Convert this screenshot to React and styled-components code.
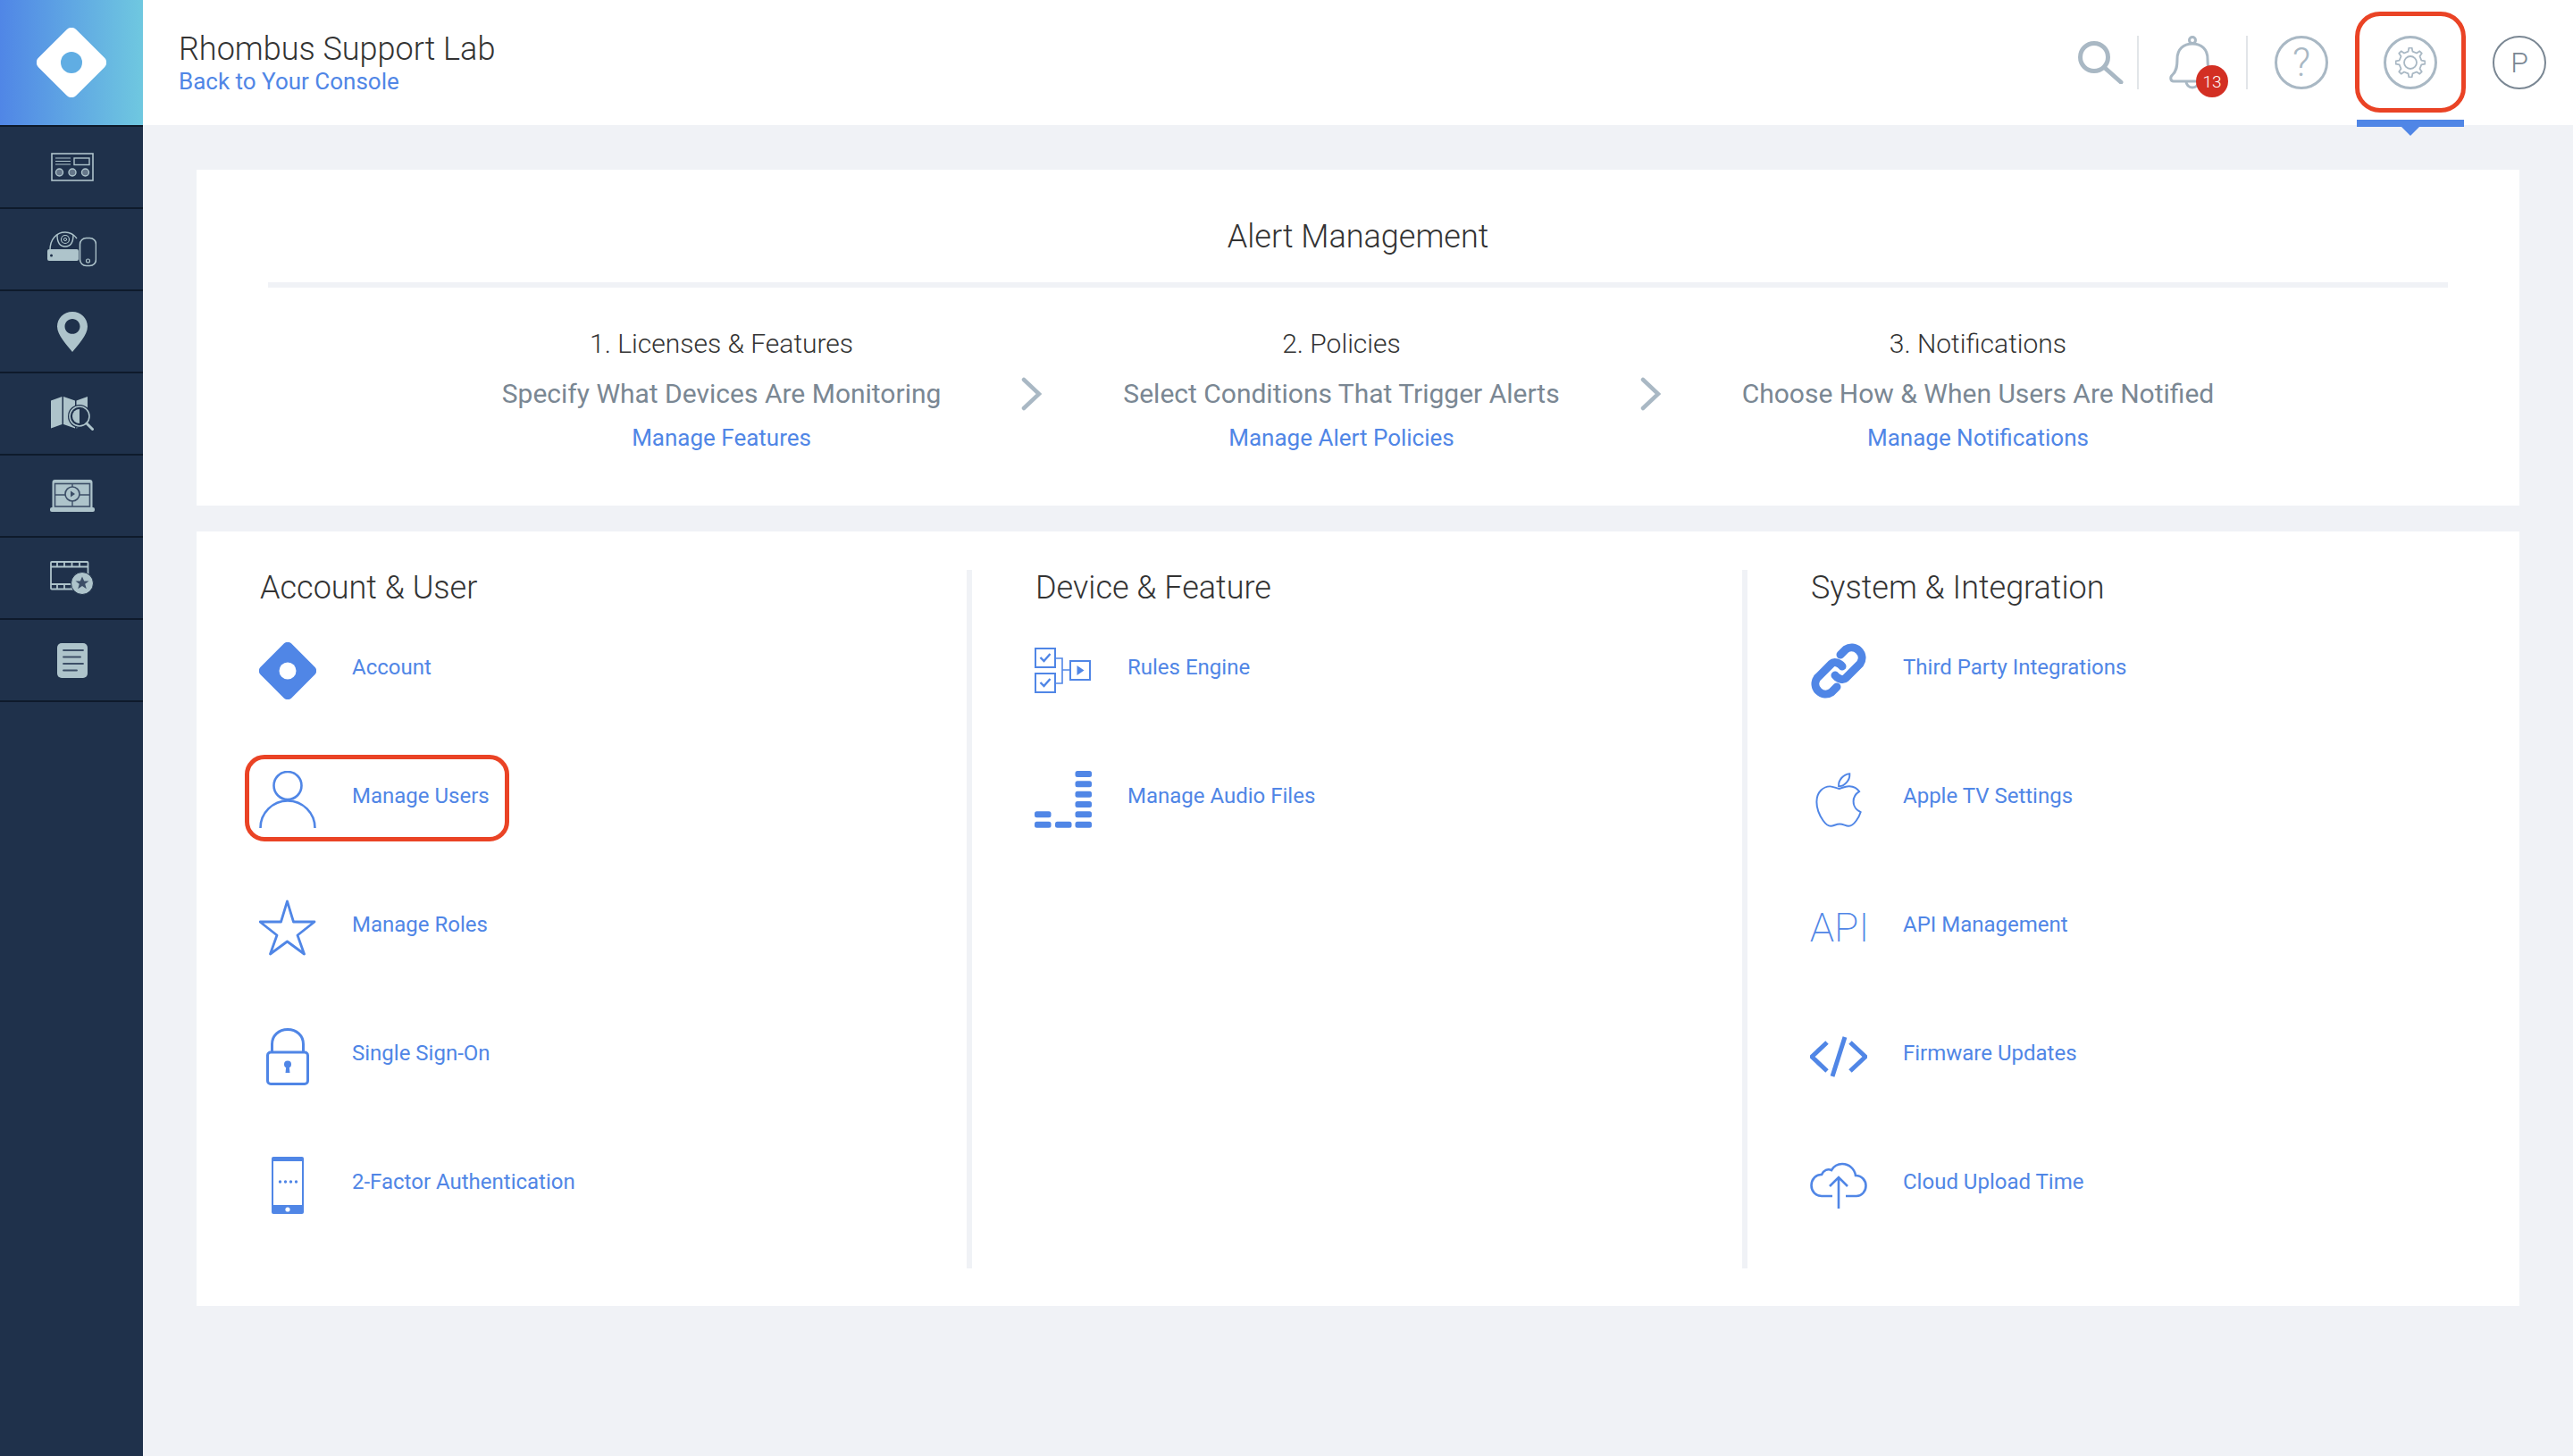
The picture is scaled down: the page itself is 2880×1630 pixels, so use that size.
import React from 'react';
import styled, { createGlobalStyle } from 'styled-components';
import { FaApple } from 'react-icons/fa';

const BLUE = '#5086e6';
const NAV = '#aec4cb';
const NAV_DARK = '#3c4e67';
const MUTED = '#a9b8c4';

const GlobalStyle = createGlobalStyle`
	html, body {
		margin: 0;
		padding: 0;
		background: #f0f2f6;
	}
	body {
		font-family: Roboto, 'Liberation Sans', sans-serif;
		color: #333;
	}
	*, *::before, *::after {
		box-sizing: border-box;
	}
`;

const gearPath = () => {
	const teeth = 8;
	const points = [];
	for (let i = 0; i < teeth; i++) {
		const a = (i / teeth) * Math.PI * 2 - Math.PI / 2;
		const step = (Math.PI * 2) / teeth;
		[
			[12.6, -0.5],
			[16.4, -0.26],
			[16.4, 0.26],
			[12.6, 0.5],
		].forEach(([r, t]) => {
			const b = a + t * step * 0.5;
			points.push(`${(17 + r * Math.cos(b)).toFixed(2)} ${(17 + r * Math.sin(b)).toFixed(2)}`);
		});
	}
	return `M${points.join(' L')} Z`;
};

const LogoMark = ({ size, fill, hole }) => (
	<svg width={size} height={size} viewBox='0 0 64 64'>
		<rect x='7.5' y='7.5' width='49' height='49' rx='6' fill={fill} transform='rotate(45 32 32)' />
		<circle cx='32' cy='32' r={hole} fill='#fff' />
	</svg>
);

const navIcons = [
	<svg key='console' width='48' height='32' viewBox='0 0 48 32' fill='none' stroke={NAV}>
		<rect x='1' y='1' width='46' height='30' strokeWidth='1.6' />
		<path d='M5 6h17M5 9.5h17M5 13h17' strokeWidth='1.2' />
		<rect x='26' y='6' width='17' height='7.5' strokeWidth='1.4' />
		<circle cx='9.5' cy='22' r='4' fill='#66778a' strokeWidth='1.4' />
		<circle cx='24' cy='22' r='4' fill='#66778a' strokeWidth='1.4' />
		<circle cx='38.5' cy='22' r='4' fill='#66778a' strokeWidth='1.4' />
	</svg>,
	<svg key='devices' width='55' height='40' viewBox='0 0 55 40' fill='none' stroke={NAV}>
		<path d='M3 21C3 9 10 1 20 1c6 0 10 3 13 7' strokeWidth='1.4' />
		<path d='M11 4c0 8 3 13 9 13s9-5 9-13' strokeWidth='1.4' />
		<circle cx='20' cy='9' r='4.5' strokeWidth='1.2' />
		<circle cx='20' cy='9' r='1.6' strokeWidth='1' />
		<rect x='0' y='20' width='35' height='13' rx='2' fill={NAV} stroke='none' />
		<circle cx='4.5' cy='27' r='1.5' fill='#1f314b' stroke='none' />
		<rect x='36.5' y='7.5' width='18' height='31' rx='7' strokeWidth='1.6' />
		<circle cx='45.5' cy='33' r='2' strokeWidth='1.2' />
	</svg>,
	<svg key='pin' width='34' height='45' viewBox='0 0 34 45'>
		<path
			fillRule='evenodd'
			fill={NAV}
			d='M17 0C7.6 0 0 7.4 0 16.6 0 26 11 38 17 45c6-7 17-19 17-28.4C34 7.4 26.4 0 17 0zm0 8c4.7 0 8.5 3.8 8.5 8.4S21.7 24.8 17 24.8s-8.5-3.8-8.5-8.4S12.3 8 17 8z'
		/>
	</svg>,
	<svg key='map' width='48' height='38' viewBox='0 0 48 38'>
		<path fill={NAV} d='M0 4.5 12.5 0v31L0 35.5zM14 0l13 4.5v31L14 31zM28.5 4.5 41 0v31l-12.5 4.5z' />
		<circle cx='32' cy='22' r='13' fill='#1f314b' />
		<circle cx='32' cy='22' r='11' fill='none' stroke={NAV} strokeWidth='1.6' />
		<path d='M32 14a8 8 0 0 0 0 16z' fill={NAV} />
		<path d='M40 30l6.5 6.5' stroke={NAV} strokeWidth='3' strokeLinecap='round' />
	</svg>,
	<svg key='laptop' width='50' height='36' viewBox='0 0 50 36' fill='none'>
		<path d='M2.5 32V3a3 3 0 0 1 3-3h39a3 3 0 0 1 3 3v29z' fill={NAV} />
		<rect x='5.5' y='4.5' width='39' height='25.5' stroke={NAV_DARK} strokeWidth='1.6' />
		<path d='M25 4.5V8M25 24v6M5.5 17H17M33 17h11.5' stroke={NAV_DARK} strokeWidth='1.4' />
		<circle cx='25' cy='16' r='8' stroke={NAV_DARK} strokeWidth='1.6' />
		<path d='M23 12.5v7l5-3.5z' fill={NAV_DARK} />
		<rect x='0' y='31' width='50' height='5' rx='2' fill={NAV} />
	</svg>,
	<svg key='film' width='49' height='38' viewBox='0 0 49 38' fill='none'>
		<rect x='1' y='1' width='41.5' height='30.5' rx='1' stroke={NAV} strokeWidth='1.8' />
		<path d='M1 6.5h41.5M1 26h41.5' stroke={NAV} strokeWidth='1.8' />
		<path d='M8 1v5.5M16 1v5.5M24.5 1v5.5M33 1v5.5M8 26v5.5M16 26v5.5M24.5 26v5.5' stroke={NAV} strokeWidth='1.8' />
		<circle cx='36' cy='25' r='12.5' fill={NAV} stroke='#1f314b' strokeWidth='1' />
		<path d='M36 17.5l2.2 5h5.3l-4.3 3.3 1.6 5.4-4.8-3.2-4.8 3.2 1.6-5.4-4.3-3.3h5.3z' fill={NAV_DARK} />
	</svg>,
	<svg key='doc' width='34' height='39' viewBox='0 0 34 39' fill='none'>
		<rect width='34' height='39' rx='5' fill={NAV} />
		<path d='M7 8h22M7 15.5h19M7 23h22M7 30.5h15' stroke={NAV_DARK} strokeWidth='1.8' strokeLinecap='round' />
	</svg>,
];

const icons = {
	account: <LogoMark size={64} fill={BLUE} hole={9.5} />,
	users: (
		<svg width='64' height='64' viewBox='0 0 64 64' fill='none' stroke={BLUE} strokeWidth='2.6'>
			<circle cx='32' cy='16.5' r='15.5' />
			<path d='M1.5 64a30.5 30.5 0 0 1 61 0' />
		</svg>
	),
	roles: (
		<svg width='64' height='64' viewBox='0 0 64 64' fill='none' stroke={BLUE} strokeWidth='2.8' strokeLinejoin='round'>
			<polygon points='31.5,2 38.5,25 62,25 43,40 50.5,61 31.5,47 12.5,61 20,40 1,25 24.5,25' />
		</svg>
	),
	sso: (
		<svg width='64' height='64' viewBox='0 0 64 64' fill='none'>
			<rect x='9.5' y='27' width='45' height='35.5' rx='3.5' stroke={BLUE} strokeWidth='3' />
			<path d='M14.5 27V18C14.5 8.5 22 1.5 32 1.5S49.5 8.5 49.5 18v9' stroke={BLUE} strokeWidth='3' />
			<circle cx='32' cy='40.5' r='4' fill={BLUE} />
			<path d='M30.5 41h3l1 9h-5z' fill={BLUE} />
		</svg>
	),
	twoFactor: (
		<svg width='64' height='64' viewBox='0 0 64 64'>
			<rect x='14' y='0' width='36' height='64' rx='2' fill={BLUE} />
			<rect x='16' y='5' width='32' height='49' fill='#fff' />
			<circle cx='23.5' cy='28' r='1.7' fill={BLUE} />
			<circle cx='29.5' cy='28' r='1.7' fill={BLUE} />
			<circle cx='35.5' cy='28' r='1.7' fill={BLUE} />
			<circle cx='41.5' cy='28' r='1.7' fill={BLUE} />
			<circle cx='32' cy='59' r='2.6' fill='#fff' />
		</svg>
	),
	rules: (
		<svg width='64' height='64' viewBox='0 0 64 64' fill='none' stroke={BLUE} strokeWidth='2'>
			<rect x='1' y='7' width='22' height='21' />
			<rect x='1' y='35' width='22' height='21' />
			<rect x='40' y='21' width='22' height='21' />
			<path d='M23 18h8v28h-8M31 31h9' strokeWidth='1.6' />
			<path d='M6.5 17l4 4 7-8M6.5 45l4 4 7-8' strokeWidth='2.4' />
			<path d='M47.5 26v11l8-5.5z' fill={BLUE} stroke='none' />
		</svg>
	),
	audio: (
		<svg width='64' height='64' viewBox='0 0 64 64' fill={BLUE}>
			<rect x='45.5' y='0' width='18.5' height='7' rx='2.5' />
			<rect x='45.5' y='11.3' width='18.5' height='7' rx='2.5' />
			<rect x='45.5' y='22.7' width='18.5' height='7' rx='2.5' />
			<rect x='45.5' y='34' width='18.5' height='7' rx='2.5' />
			<rect x='45.5' y='45.3' width='18.5' height='7' rx='2.5' />
			<rect x='45.5' y='56.7' width='18.5' height='7' rx='2.5' />
			<rect x='0' y='45.3' width='18.5' height='7' rx='2.5' />
			<rect x='0' y='56.7' width='18.5' height='7' rx='2.5' />
			<rect x='23' y='56.7' width='18.5' height='7' rx='2.5' />
		</svg>
	),
	link: (
		<svg width='64' height='64' viewBox='0 0 64 64' fill='none' stroke={BLUE} strokeWidth='9' strokeLinecap='round'>
			<path d='M34 14l6-6a11.5 11.5 0 0 1 16 16L40 40c-3 3-9 1-12-3' />
			<path d='M30 50l-6 6A11.5 11.5 0 0 1 8 40l16-16c3-3 9-1 12 3' />
		</svg>
	),
	apple: <AppleGlyph />,
	api: <ApiGlyph />,
	code: (
		<svg width='64' height='64' viewBox='0 0 64 64' fill='none' stroke={BLUE} strokeWidth='5'>
			<path d='M19 16L2 32l17 16M45 16l17 16-17 16M39 10L25 54' />
		</svg>
	),
	cloud: (
		<svg width='64' height='64' viewBox='0 0 64 64' fill='none' stroke={BLUE} strokeWidth='2.6'>
			<path d='M25 44H13C6 44 1.5 38.5 1.5 32S6.5 19.5 13 20c2-5 7-7 11-5 3-5 7-7 12-7 8 0 14 6 15 13 7 0 11.5 5.5 11.5 11.5S58 44 52 44H40' />
			<path d='M32 58V23M22 33l10-10 10 10' />
		</svg>
	),
};

function AppleGlyph() {
	return <FaApple size={67} color={BLUE} fill='none' stroke={BLUE} strokeWidth='15' />;
}

function ApiGlyph() {
	return <ApiMark>API</ApiMark>;
}

const sections = [
	{
		title: 'Account & User',
		items: [
			{ label: 'Account', icon: icons.account },
			{ label: 'Manage Users', icon: icons.users, marked: true },
			{ label: 'Manage Roles', icon: icons.roles },
			{ label: 'Single Sign-On', icon: icons.sso },
			{ label: '2-Factor Authentication', icon: icons.twoFactor },
		],
	},
	{
		title: 'Device & Feature',
		items: [
			{ label: 'Rules Engine', icon: icons.rules },
			{ label: 'Manage Audio Files', icon: icons.audio },
		],
	},
	{
		title: 'System & Integration',
		items: [
			{ label: 'Third Party Integrations', icon: icons.link },
			{ label: 'Apple TV Settings', icon: icons.apple },
			{ label: 'API Management', icon: icons.api },
			{ label: 'Firmware Updates', icon: icons.code },
			{ label: 'Cloud Upload Time', icon: icons.cloud },
		],
	},
];

const steps = [
	{
		title: '1. Licenses & Features',
		text: 'Specify What Devices Are Monitoring',
		link: 'Manage Features',
	},
	{
		title: '2. Policies',
		text: 'Select Conditions That Trigger Alerts',
		link: 'Manage Alert Policies',
	},
	{
		title: '3. Notifications',
		text: 'Choose How & When Users Are Notified',
		link: 'Manage Notifications',
	},
];

export default function App() {
	return (
		<Page>
			<GlobalStyle />
			<Sidebar>
				<LogoCell>
					<LogoMark size={78} fill='#fff' hole={0} />
					<LogoHole />
				</LogoCell>
				{navIcons.map((icon) => (
					<NavRow key={icon.key}>{icon}</NavRow>
				))}
			</Sidebar>
			<Main>
				<Header>
					<Brand>
						<BrandName>Rhombus Support Lab</BrandName>
						<BrandLink>Back to Your Console</BrandLink>
					</Brand>
					<Actions>
						<svg width='51' height='48' viewBox='0 0 51 48' fill='none' stroke={MUTED} strokeWidth='5' strokeLinecap='round'>
							<circle cx='18' cy='18' r='15.5' />
							<path d='M30 30l18 16' />
						</svg>
						<Separator $left={15} />
						<BellWrap>
							<svg width='54' height='60' viewBox='0 0 54 60' fill='none' stroke={MUTED} strokeWidth='3'>
								<circle cx='27' cy='5' r='3.5' />
								<path d='M6 51c-4 0-4-5-1.5-7C9 40 10 35 10 26c0-11 7-17 17-17s17 6 17 17c0 9 1 14 5.5 18 2.5 2 2.5 7-1.5 7z' />
								<path d='M20 51c0 4 3 7 7 7s7-3 7-7' />
							</svg>
							<Badge>13</Badge>
						</BellWrap>
						<Separator $left={33} />
						<RoundButton $left={30}>?</RoundButton>
						<ActiveTab>
							<RoundButton>
								<svg width='34' height='34' viewBox='0 0 34 34' fill='none' stroke={MUTED} strokeWidth='1.8' strokeLinejoin='round'>
									<path d={gearPath()} />
									<circle cx='17' cy='17' r='7' />
								</svg>
							</RoundButton>
							<TabMarker />
						</ActiveTab>
						<RoundButton $left={62} $dark>
							P
						</RoundButton>
					</Actions>
				</Header>
				<Content>
					<AlertCard>
						<AlertTitle>Alert Management</AlertTitle>
						<Rule />
						<Steps>
							{steps.map((step, i) => (
								<React.Fragment key={step.title}>
									{i > 0 && (
										<StepArrow width='24' height='38' viewBox='0 0 24 38' fill='none' stroke={MUTED} strokeWidth='4.5' strokeLinecap='round'>
											<path d='M3 3l17 16L3 35' />
										</StepArrow>
									)}
									<Step>
										<StepTitle>{step.title}</StepTitle>
										<StepText>{step.text}</StepText>
										<StepLink>{step.link}</StepLink>
									</Step>
								</React.Fragment>
							))}
						</Steps>
					</AlertCard>
					<SettingsCard>
						{sections.map((section) => (
							<Section key={section.title}>
								<SectionTitle>{section.title}</SectionTitle>
								<ItemList>
									{section.items.map((item) => (
										<Item key={item.label}>
											<ItemIcon>{item.icon}</ItemIcon>
											<ItemLabel>{item.label}</ItemLabel>
											{item.marked && <Highlight />}
										</Item>
									))}
								</ItemList>
							</Section>
						))}
					</SettingsCard>
				</Content>
			</Main>
		</Page>
	);
}

const Page = styled.div`
	display: flex;
	min-height: 1630px;
	background: #f0f2f6;
`;

const Sidebar = styled.nav`
	flex: 0 0 160px;
	background: #1f314b;
`;

const LogoCell = styled.div`
	position: relative;
	display: flex;
	align-items: center;
	justify-content: center;
	height: 142px;
	border-bottom: 2px solid #0e1a2b;
	background: linear-gradient(90deg, #5086e6 0%, #6fc8e0 100%);
`;

const LogoHole = styled.span`
	position: absolute;
	left: 68px;
	top: 58px;
	width: 24px;
	height: 24px;
	border-radius: 50%;
	background: #60ade3;
`;

const NavRow = styled.div`
	display: flex;
	align-items: center;
	justify-content: center;
	height: 92px;
	padding-left: 1px;
	border-bottom: 2px solid #0e1a2b;
`;

const Main = styled.main`
	flex: 1;
	min-width: 0;
`;

const Header = styled.header`
	display: flex;
	align-items: center;
	justify-content: space-between;
	height: 140px;
	padding: 0 30px 0 40px;
	background: #fff;
`;

const Brand = styled.div`
	display: flex;
	flex-direction: column;
`;

const BrandName = styled.div`
	font-size: 36px;
	font-weight: 300;
	line-height: 42px;
	color: #333;
`;

const BrandLink = styled.a`
	font-size: 26px;
	line-height: 30px;
	color: ${BLUE};
`;

const Actions = styled.div`
	display: flex;
	align-items: center;
`;

const Separator = styled.span`
	width: 2px;
	height: 60px;
	margin-left: ${(p) => p.$left}px;
	background: #e2e5e8;
`;

const BellWrap = styled.div`
	position: relative;
	display: flex;
	margin-left: 33px;
`;

const Badge = styled.span`
	position: absolute;
	left: 31px;
	top: 33px;
	display: flex;
	align-items: center;
	justify-content: center;
	width: 36px;
	height: 36px;
	border-radius: 50%;
	background: #d32f23;
	font-size: 19px;
	font-weight: 300;
	color: #fff;
`;

const RoundButton = styled.div`
	display: flex;
	align-items: center;
	justify-content: center;
	width: 60px;
	height: 60px;
	margin-left: ${(p) => p.$left || 0}px;
	border: ${(p) => (p.$dark ? '2.5px' : '3px')} solid ${(p) => (p.$dark ? '#7a8793' : MUTED)};
	border-radius: 50%;
	font-size: ${(p) => (p.$dark ? 32 : 44)}px;
	font-weight: 300;
	color: ${(p) => (p.$dark ? '#7a8793' : MUTED)};
`;

const ActiveTab = styled.div`
	position: relative;
	margin-left: 62px;

	&::before {
		content: '';
		position: absolute;
		left: -32px;
		top: -27px;
		width: 124px;
		height: 113px;
		border: 5px solid #ea4325;
		border-radius: 28px;
	}
`;

const TabMarker = styled.span`
	position: absolute;
	left: -30px;
	top: 94px;
	width: 120px;
	height: 8px;
	background: ${BLUE};

	&::after {
		content: '';
		position: absolute;
		left: 50px;
		top: 8px;
		border-left: 10px solid transparent;
		border-right: 10px solid transparent;
		border-top: 10px solid ${BLUE};
	}
`;

const Content = styled.div`
	display: flex;
	flex-direction: column;
	gap: 29px;
	padding: 50px 60px;
`;

const AlertCard = styled.section`
	height: 376px;
	padding: 50px 80px 0;
	background: #fff;
`;

const AlertTitle = styled.h1`
	margin: 0;
	font-size: 36px;
	font-weight: 300;
	line-height: 50px;
	text-align: center;
	color: #333;
`;

const Rule = styled.div`
	height: 6px;
	margin-top: 26px;
	background: #f0f2f6;
`;

const Steps = styled.div`
	display: flex;
	align-items: center;
	justify-content: center;
	gap: 90px;
	margin-top: 43px;
`;

const StepArrow = styled.svg`
	flex: none;
	margin-top: 9px;
`;

const Step = styled.div`
	display: flex;
	flex-direction: column;
	align-items: center;
`;

const StepTitle = styled.div`
	font-size: 30px;
	font-weight: 300;
	line-height: 40px;
	color: #333;
`;

const StepText = styled.div`
	margin-top: 16px;
	font-size: 30px;
	line-height: 40px;
	color: #7a8793;
`;

const StepLink = styled.a`
	margin-top: 11px;
	font-size: 26px;
	line-height: 36px;
	color: ${BLUE};
`;

const SettingsCard = styled.section`
	display: grid;
	grid-template-columns: 868px 868px 1fr;
	height: 867px;
	padding-top: 43px;
	background: #fff;
`;

const Section = styled.div`
	height: 782px;
	padding-left: 71px;
	border-right: 6px solid #f0f2f6;

	&:last-child {
		border-right: 0;
	}
`;

const SectionTitle = styled.h2`
	margin: -1px 0 0;
	font-size: 36px;
	font-weight: 300;
	line-height: 42px;
	color: #333;
`;

const ItemList = styled.div`
	display: flex;
	flex-direction: column;
	gap: 80px;
	margin: 40px 0 0 -1px;
`;

const Item = styled.a`
	position: relative;
	display: flex;
	align-items: center;
	gap: 40px;
	height: 64px;
`;

const ItemIcon = styled.span`
	display: flex;
	align-items: center;
	justify-content: center;
	flex: 0 0 64px;
	width: 64px;
	height: 64px;
`;

const ItemLabel = styled.span`
	padding-bottom: 8px;
	font-size: 24px;
	color: ${BLUE};
`;

const Highlight = styled.span`
	position: absolute;
	left: -16px;
	top: -18px;
	width: 296px;
	height: 97px;
	border: 5px solid #ea4325;
	border-radius: 22px;
`;

const ApiMark = styled.span`
	margin-left: 2px;
	font-size: 45px;
	font-weight: 200;
	line-height: 64px;
	color: ${BLUE};
`;
